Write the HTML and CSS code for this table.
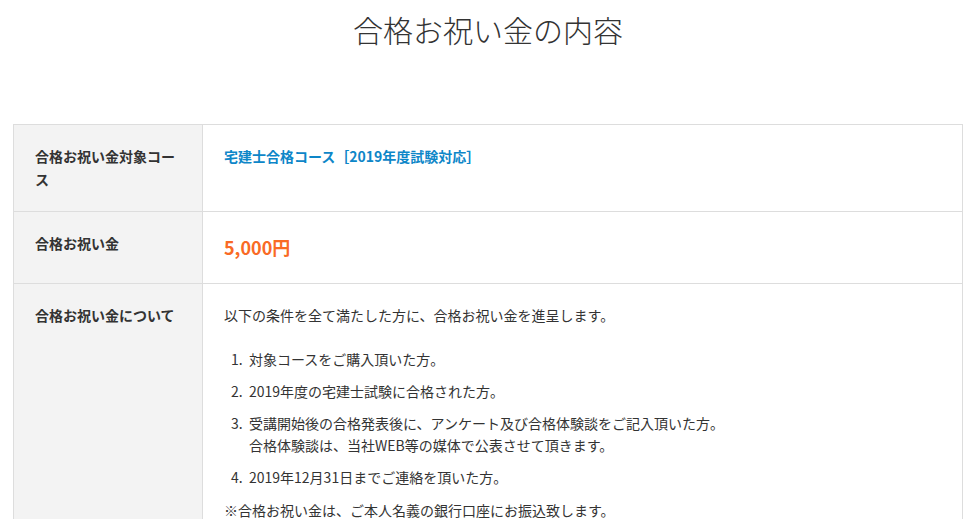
FILE: index.html
```html
<!DOCTYPE html>
<html lang="ja">
<head>
<meta charset="utf-8">
<title>合格お祝い金の内容</title>
<link rel="stylesheet" href="styles.css">
</head>
<body>
<main class="page">
  <h1 class="title">合格お祝い金の内容</h1>
  <table class="info">
    <tr>
      <th>合格お祝い金対象コース</th>
      <td><a class="course" href="#">宅建士合格コース［2019年度試験対応］</a></td>
    </tr>
    <tr>
      <th>合格お祝い金</th>
      <td><span class="amount">5,000円</span></td>
    </tr>
    <tr>
      <th>合格お祝い金について</th>
      <td>
        <p class="lead">以下の条件を全て満たした方に、合格お祝い金を進呈します。</p>
        <ol class="conditions">
          <li>対象コースをご購入頂いた方。</li>
          <li>2019年度の宅建士試験に合格された方。</li>
          <li>受講開始後の合格発表後に、アンケート及び合格体験談をご記入頂いた方。<br>合格体験談は、当社WEB等の媒体で公表させて頂きます。</li>
          <li>2019年12月31日までご連絡を頂いた方。</li>
        </ol>
        <p class="note">※合格お祝い金は、ご本人名義の銀行口座にお振込致します。</p>
      </td>
    </tr>
  </table>
</main>
</body>
</html>
```
FILE: styles.css
```css
html, body {
  margin: 0;
  padding: 0;
  background: #fff;
}
body {
  font-family: "Noto Sans CJK JP", "Noto Sans", sans-serif;
  color: #333;
  font-size: 14px;
}
.page {
  width: 950px;
  margin: 0 0 0 13px;
}
.title {
  margin: 0;
  padding-top: 8px;
  height: 124px;
  box-sizing: border-box;
  text-align: center;
  font-size: 30px;
  font-weight: 300;
  line-height: 42px;
  color: #333;
}
.info {
  width: 950px;
  border-collapse: collapse;
  border: 1px solid #ddd;
}
.info th,
.info td {
  border: 1px solid #ddd;
  padding: 20px 20px 20px 21px;
  vertical-align: top;
  text-align: left;
  line-height: 23px;
}
.info th {
  width: 147px;
  background: #f3f3f3;
  font-weight: bold;
  font-size: 14px;
}
.info td {
  background: #fff;
}
.course {
  color: #0d86c8;
  font-weight: bold;
  text-decoration: none;
}
.amount {
  display: block;
  color: #f96a25;
  font-weight: bold;
  font-size: 18px;
  line-height: 31px;
}
.lead {
  margin: 0 0 22px;
}
.conditions {
  margin: 0 0 9px;
  padding-left: 25px;
}
.conditions li {
  margin-bottom: 10.5px;
  line-height: 21.5px;
}
.conditions li::marker {
  content: counter(list-item) ".\00a0\00a0";
}
.note {
  margin: 0;
}
```
